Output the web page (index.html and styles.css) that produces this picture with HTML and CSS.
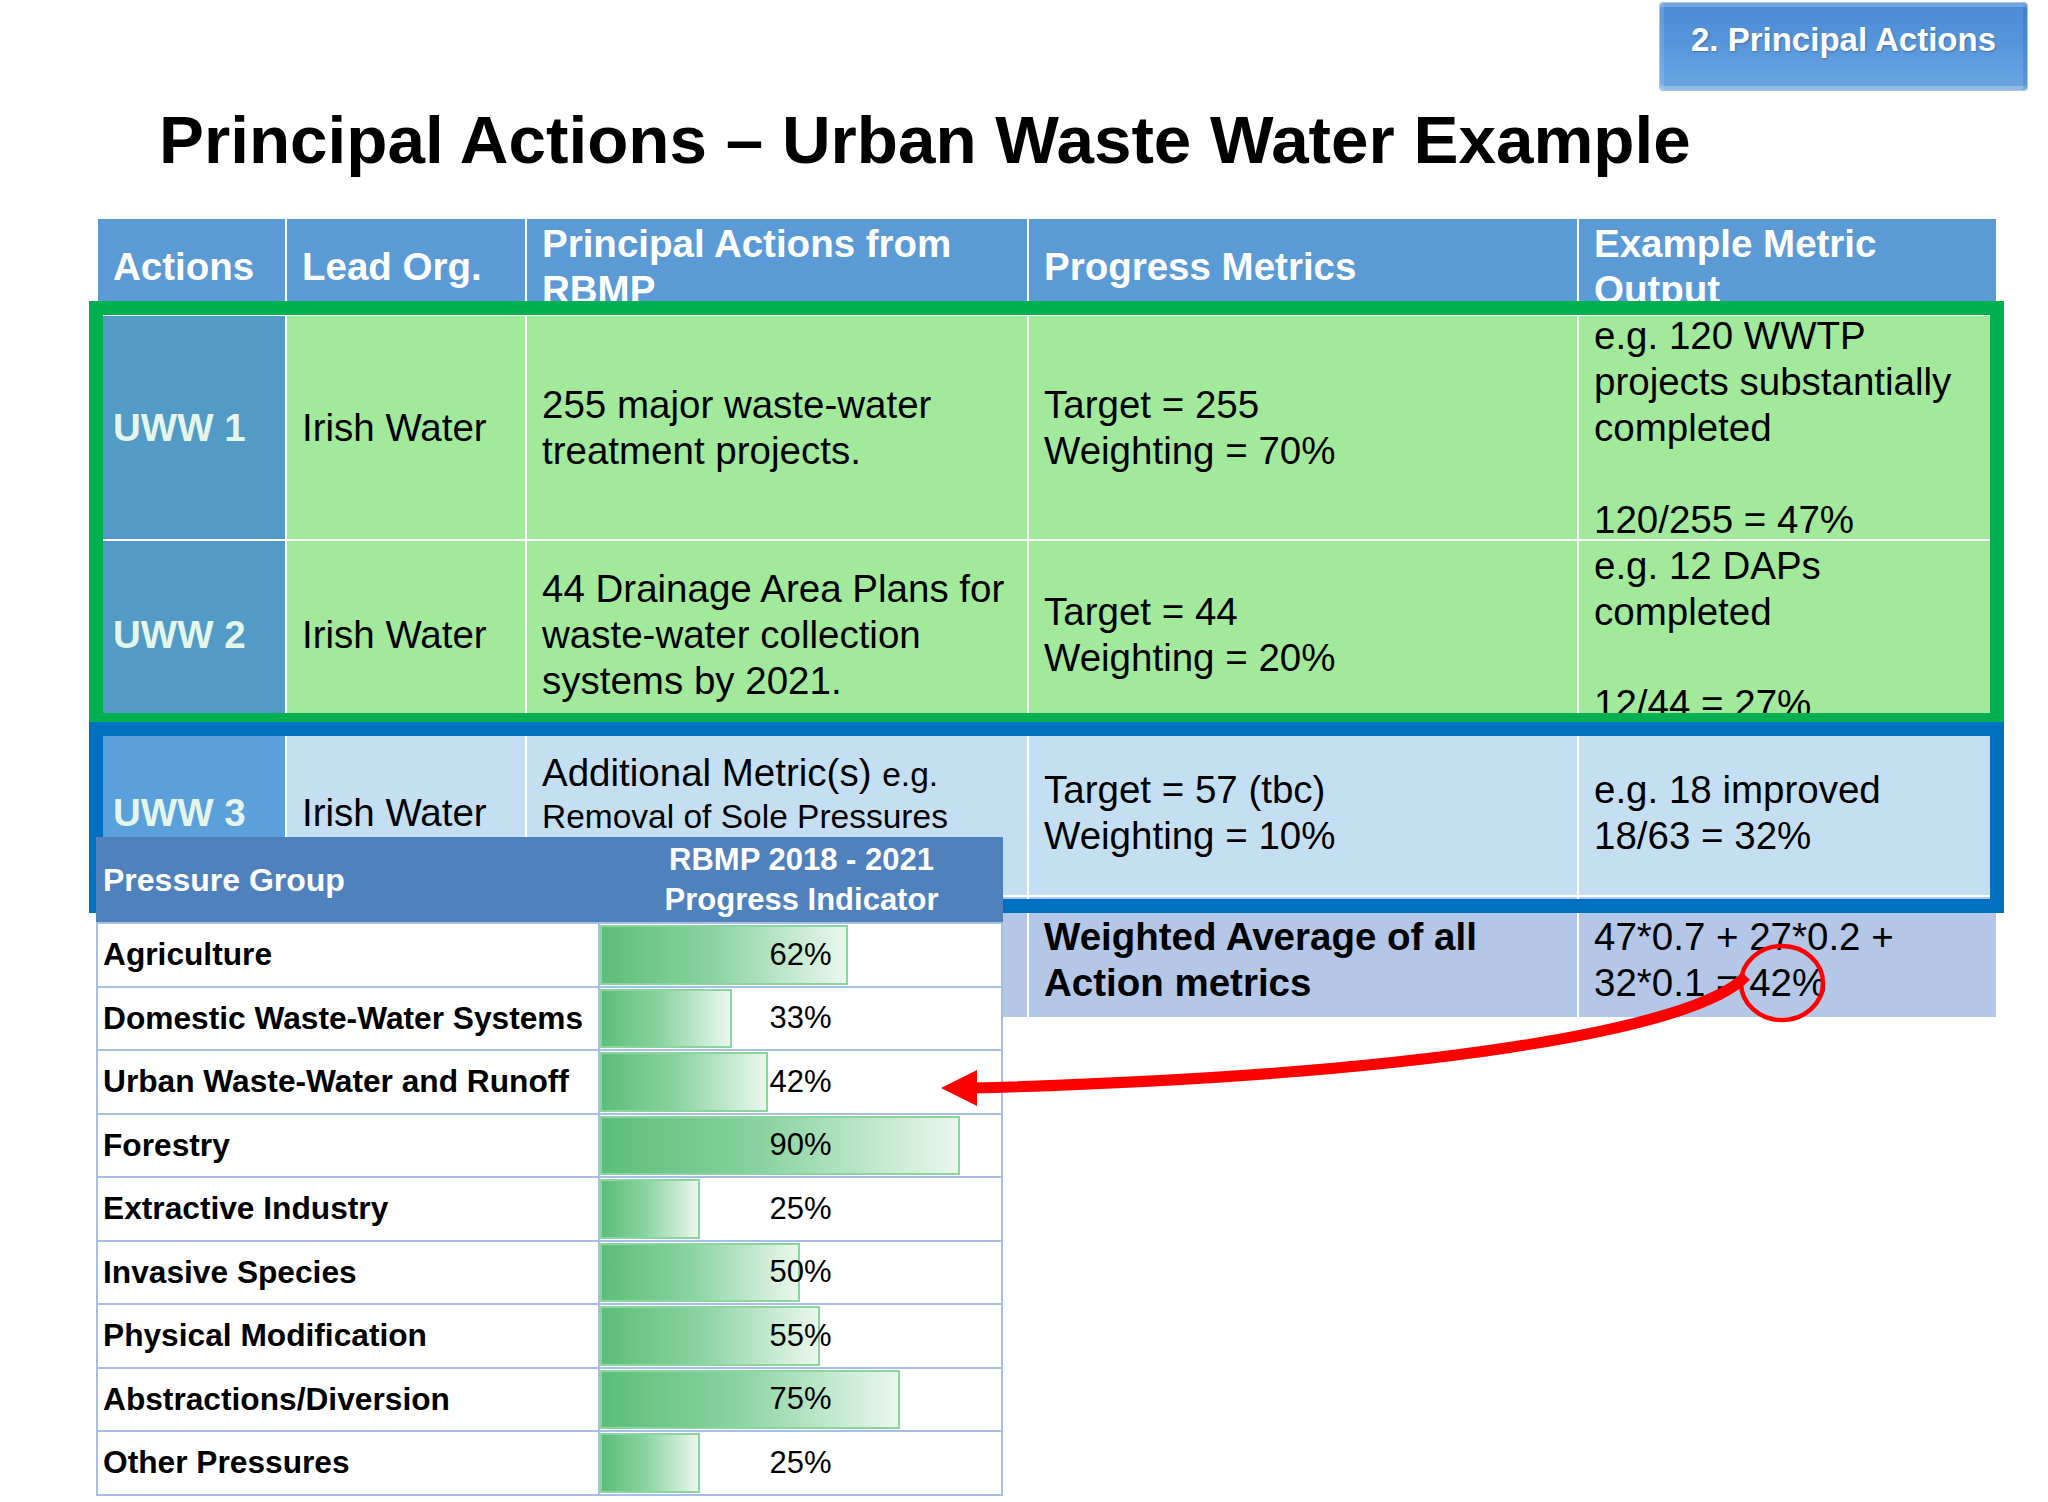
FILE: index.html
```html
<!DOCTYPE html>
<html lang="en">
<head>
<meta charset="utf-8">
<title>Principal Actions – Urban Waste Water Example</title>
<link rel="stylesheet" href="styles.css">
</head>
<body>
<div class="page">
  <div class="topbar"><div class="badge">2. Principal Actions</div></div>
  <h1 class="title">Principal Actions – Urban Waste Water Example</h1>

  <div class="grid">
    <div class="cell h">Actions</div>
    <div class="cell h">Lead Org.</div>
    <div class="cell h">Principal Actions from<br>RBMP</div>
    <div class="cell h">Progress Metrics</div>
    <div class="cell h">Example Metric<br>Output</div>

    <div class="cell id">UWW 1</div>
    <div class="cell g">Irish Water</div>
    <div class="cell g">255 major waste-water<br>treatment projects.</div>
    <div class="cell g">Target = 255<br>Weighting = 70%</div>
    <div class="cell g">e.g. 120 WWTP<br>projects substantially<br>completed<br><br>120/255 = 47%</div>

    <div class="cell id">UWW 2</div>
    <div class="cell g">Irish Water</div>
    <div class="cell g">44 Drainage Area Plans for<br>waste-water collection<br>systems by 2021.</div>
    <div class="cell g">Target = 44<br>Weighting = 20%</div>
    <div class="cell g">e.g. 12 DAPs<br>completed<br><br>12/44 = 27%</div>

    <div class="cell id3">UWW 3</div>
    <div class="cell b">Irish Water</div>
    <div class="cell b top"><div class="tight">Additional Metric(s) <span class="sm">e.g.</span><br><span class="sm">Removal of Sole Pressures</span></div></div>
    <div class="cell b">Target = 57 (tbc)<br>Weighting = 10%</div>
    <div class="cell b">e.g. 18 improved<br>18/63 = 32%</div>

    <div class="cell l"></div>
    <div class="cell l"></div>
    <div class="cell l"></div>
    <div class="cell l bold">Weighted Average of all<br>Action metrics</div>
    <div class="cell l">47*0.7 + 27*0.2 +<br>32*0.1 = 42%</div>
  </div>

  <div class="frame green"></div>
  <div class="frame blue"></div>

  <div class="ptable">
    <div class="prow phead">
      <div class="pgroup">Pressure Group</div>
      <div class="pind">RBMP 2018 - 2021<br>Progress Indicator</div>
    </div>
    <div class="prow"><div class="plabel">Agriculture</div><div class="pval"><div class="bar" style="width:248px"></div><span class="pct">62%</span></div></div>
    <div class="prow"><div class="plabel">Domestic Waste-Water Systems</div><div class="pval"><div class="bar" style="width:132px"></div><span class="pct">33%</span></div></div>
    <div class="prow"><div class="plabel">Urban Waste-Water and Runoff</div><div class="pval"><div class="bar" style="width:168px"></div><span class="pct">42%</span></div></div>
    <div class="prow"><div class="plabel">Forestry</div><div class="pval"><div class="bar" style="width:360px"></div><span class="pct">90%</span></div></div>
    <div class="prow"><div class="plabel">Extractive Industry</div><div class="pval"><div class="bar" style="width:100px"></div><span class="pct">25%</span></div></div>
    <div class="prow"><div class="plabel">Invasive Species</div><div class="pval"><div class="bar" style="width:200px"></div><span class="pct">50%</span></div></div>
    <div class="prow"><div class="plabel">Physical Modification</div><div class="pval"><div class="bar" style="width:220px"></div><span class="pct">55%</span></div></div>
    <div class="prow"><div class="plabel">Abstractions/Diversion</div><div class="pval"><div class="bar" style="width:300px"></div><span class="pct">75%</span></div></div>
    <div class="prow"><div class="plabel">Other Pressures</div><div class="pval"><div class="bar" style="width:100px"></div><span class="pct">25%</span></div></div>
  </div>

  <svg class="annot" width="2048" height="1502" viewBox="0 0 2048 1502" aria-hidden="true">
    <ellipse cx="1782" cy="983" rx="41" ry="37" fill="none" stroke="#ff0000" stroke-width="4.5"/>
    <path d="M1746 976 C1695 1030, 1420 1076, 972 1088" fill="none" stroke="#ff0000" stroke-width="11"/>
    <polygon points="941,1088 977,1070 977,1106" fill="#ff0000"/>
  </svg>
</div>
</body>
</html>
```
FILE: styles.css
```css
html, body {
  margin: 0;
  padding: 0;
  background: #ffffff;
}

.page {
  position: relative;
  width: 2048px;
  height: 1502px;
  overflow: hidden;
  font-family: "Liberation Sans", Arial, sans-serif;
  color: #000;
}

.topbar {
  display: flex;
  justify-content: flex-end;
  padding: 3px 21px 0 0;
}

.badge {
  box-sizing: border-box;
  width: 367px;
  height: 87px;
  padding-top: 17px;
  text-align: center;
  font-weight: bold;
  font-size: 33px;
  line-height: 40px;
  color: #ffffff;
  text-shadow: 1px 1px 2px rgba(0, 0, 0, 0.25);
  border-radius: 3px;
  background: linear-gradient(180deg, #4b8bd5 0%, #5595db 45%, #6ba7e2 100%);
  box-shadow:
    inset 0 4px 0 rgba(255, 255, 255, 0.22),
    inset 4px 0 0 rgba(255, 255, 255, 0.12),
    inset -4px 0 0 rgba(30, 80, 150, 0.18),
    inset 0 -4px 0 rgba(255, 255, 255, 0.25),
    0 0 0 1px rgba(90, 140, 200, 0.5);
}

.title {
  margin: 10px 0 0 159px;
  font-size: 67.4px;
  line-height: 80px;
  font-weight: bold;
  white-space: nowrap;
}

.grid {
  margin: 39px 0 0 98px;
  display: grid;
  grid-template-columns: 187px 238px 500px 548px 417px;
  grid-template-rows: 95px 223px 188px 164px 120px;
  gap: 2px;
  width: 1898px;
  background: #ffffff;
}

.cell {
  display: flex;
  align-items: center;
  box-sizing: border-box;
  padding: 0 6px 0 15px;
  font-size: 38.5px;
  line-height: 46px;
  white-space: nowrap;
  overflow: visible;
}

.cell.top {
  align-items: flex-start;
  padding-top: 21px;
}

.tight {
  line-height: 42px;
}

.h {
  background: #5b9bd5;
  color: #ffffff;
  font-weight: bold;
}

.id {
  background: #519bc6;
  color: #e4f5ec;
  font-weight: bold;
}

.id3 {
  background: #5aa1dc;
  color: #e4f5ec;
  font-weight: bold;
}

.g {
  background: #a3e99b;
}

.b {
  background: #c5dff2;
}

.l {
  background: #b4c7e7;
  padding-top: 5px;
}

.bold {
  font-weight: bold;
}

.sm {
  font-size: 33.5px;
  line-height: 38px;
}

.frame {
  position: absolute;
  box-sizing: border-box;
  left: 89px;
  width: 1915px;
  border-width: 14px;
  border-style: solid;
}

.frame.green {
  top: 301px;
  height: 426px;
  border-color: #00b050;
}

.frame.blue {
  top: 722px;
  height: 191px;
  border-color: #0070c0;
}

.ptable {
  position: absolute;
  left: 96px;
  top: 837px;
  width: 907px;
  box-sizing: border-box;
  display: flex;
  flex-direction: column;
  background: #ffffff;
  border: 2px solid #a7bfe3;
  border-top: 0;
}

.prow {
  display: grid;
  grid-template-columns: 502px 1fr;
  height: 63.5px;
  box-sizing: border-box;
  border-top: 2px solid #a7bfe3;
}

.prow.phead {
  height: 85px;
  border-top: 0;
  background: #4f81bd;
  color: #ffffff;
  font-weight: bold;
  font-size: 31px;
  line-height: 40px;
  margin: 0 -2px;
  grid-template-columns: 504px 1fr;
}

.pgroup {
  display: flex;
  align-items: center;
  padding-left: 7px;
  font-size: 32px;
}

.pind {
  display: flex;
  align-items: center;
  justify-content: center;
  text-align: center;
}

.plabel {
  display: flex;
  align-items: center;
  padding-left: 5px;
  font-size: 31.7px;
  font-weight: bold;
  white-space: nowrap;
  border-right: 2px solid #a7bfe3;
}

.pval {
  display: grid;
  grid-template: 1fr / 1fr;
  padding: 1px 0;
}

.bar {
  grid-area: 1 / 1;
  justify-self: start;
  box-sizing: border-box;
  border: 2px solid #8ad59e;
  background: linear-gradient(90deg, #5cbe79 0%, #8ad3a0 45%, #eaf7ed 100%);
}

.pct {
  grid-area: 1 / 1;
  justify-self: center;
  align-self: center;
  font-size: 31px;
}

.annot {
  position: absolute;
  left: 0;
  top: 0;
  pointer-events: none;
}
```
